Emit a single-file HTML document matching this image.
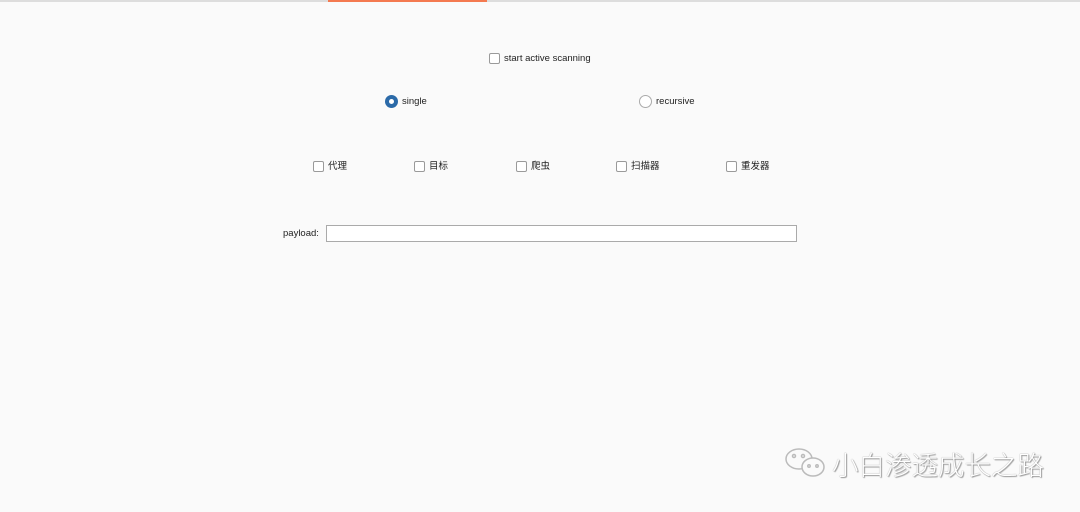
<!DOCTYPE html>
<html><head><meta charset="utf-8"><style>
body{margin:0;width:1080px;height:512px;background:#fafafa;position:relative;overflow:hidden;font-family:"Liberation Sans","Noto Sans CJK SC",sans-serif;font-size:9.5px;color:#222}
.a{position:absolute}
.cb{position:absolute;width:11px;height:11px;border:1px solid #9a9a9a;border-radius:2px;background:#fff;box-sizing:border-box}
.t{position:absolute;line-height:12px}
</style></head><body>
<div class="a" style="left:0;top:0;width:1080px;height:2px;background:#ddd"></div>
<div class="a" style="left:328px;top:0;width:159px;height:2px;background:#f47a50"></div>
<div class="cb" style="left:489px;top:53px"></div><div class="t" style="left:504px;top:53px">start active scanning</div>
<div class="a" style="left:385px;top:95px;width:13px;height:13px;border-radius:50%;background:#2b6aa8"></div>
<div class="a" style="left:389px;top:99px;width:5px;height:5px;border-radius:50%;background:#fff"></div>
<div class="t" style="left:402px;top:96px">single</div>
<div class="a" style="left:639px;top:95px;width:13px;height:13px;border-radius:50%;border:1px solid #aaa;box-sizing:border-box;background:#fff"></div>
<div class="t" style="left:656px;top:96px">recursive</div>
<div class="cb" style="left:313px;top:161px"></div><div class="t" style="left:328px;top:161px">代理</div>
<div class="cb" style="left:414px;top:161px"></div><div class="t" style="left:429px;top:161px">目标</div>
<div class="cb" style="left:516px;top:161px"></div><div class="t" style="left:531px;top:161px">爬虫</div>
<div class="cb" style="left:616px;top:161px"></div><div class="t" style="left:631px;top:161px">扫描器</div>
<div class="cb" style="left:726px;top:161px"></div><div class="t" style="left:741px;top:161px">重发器</div>
<div class="t" style="left:283px;top:228px">payload:</div>
<div class="a" style="left:326px;top:225px;width:471px;height:17px;border:1px solid #aaa;box-sizing:border-box;background:#fff"></div>
<svg class="a" style="left:783px;top:446px" width="46" height="36" viewBox="0 0 46 36" fill="none" stroke="#bbb" stroke-width="1.5">
<ellipse cx="16" cy="13" rx="13" ry="10"/><ellipse cx="30" cy="21" rx="11" ry="9" fill="#fafafa"/>
<circle cx="11" cy="10" r="1.5"/><circle cx="20" cy="10" r="1.5"/><circle cx="26" cy="20" r="1.2"/><circle cx="34" cy="20" r="1.2"/></svg>
<div class="a" style="left:832px;top:446px;font-size:26.5px;line-height:36px;color:#fff;text-shadow:0 0 1px #888,1px 1px 1px #999;font-family:'Noto Sans CJK SC',sans-serif;font-weight:300">小白渗透成长之路</div>
</body></html>
